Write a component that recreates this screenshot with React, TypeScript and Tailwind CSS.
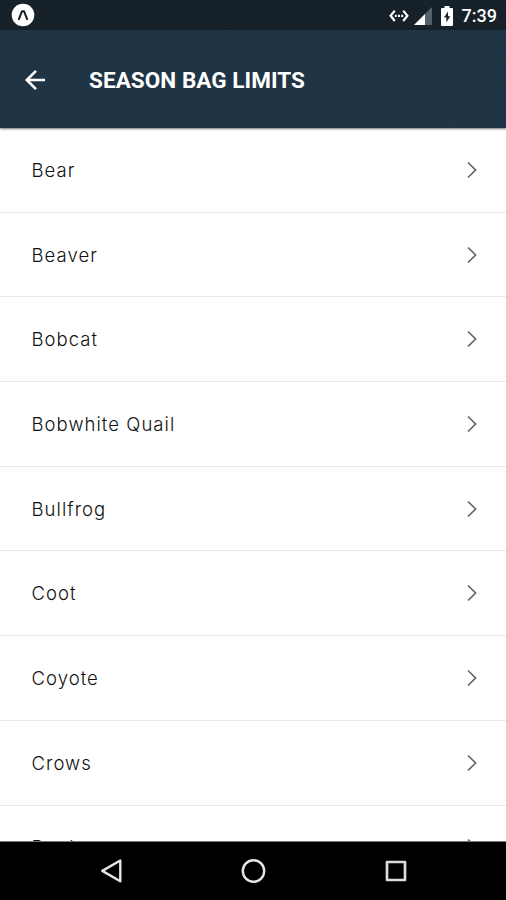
import React from 'react';

const species = [
  'Bear',
  'Beaver',
  'Bobcat',
  'Bobwhite Quail',
  'Bullfrog',
  'Coot',
  'Coyote',
  'Crows',
  'Ducks',
];

const StatusBar: React.FC = () => (
  <div className="flex h-[30px] shrink-0 items-center justify-between bg-[#16212a] pl-[11px] pr-[9px]">
    <svg className="size-[24px]" viewBox="0 0 24 24">
      <circle cx="12" cy="12" r="11.3" fill="#fff" />
      <path d="M7.6 16.8 11 8.2h2l3.4 8.6" fill="none" stroke="#16212a" strokeWidth="2" strokeLinejoin="round" />
    </svg>
    <div className="flex items-center pt-[2px]">
      <svg className="mr-[5px] h-[14px] w-[20px]" viewBox="0 0 20 14" fill="none" stroke="#fff" strokeWidth="2.2">
        <path d="M5.8 1.6 1.6 6.8l4.2 5.2M14.2 1.6l4.2 5.2-4.2 5.2" />
        <path d="M5.8 6.8h2M9 6.8h2M12.2 6.8h2" />
      </svg>
      <svg className="mr-[9px] h-[18px] w-[18px]" viewBox="0 0 18 18">
        <path d="M18 0v18H0z" fill="#52616c" />
        <path d="M11 7v11H0z" fill="#fff" />
      </svg>
      <svg className="mr-[9px] h-[20px] w-[12px]" viewBox="0 0 12 20">
        <path d="M3.5 0h5v2H11q1 0 1 1v16q0 1-1 1H1q-1 0-1-1V3q0-1 1-1h2.5z" fill="#fff" />
        <path d="M7 5.5 3 11.6h2.4V16.5l3.8-6.3H7z" fill="#16212a" />
      </svg>
      <span className="text-[18px] leading-[20px] font-medium text-white">7:39</span>
    </div>
  </div>
);

const Header: React.FC = () => (
  <header className="relative z-10 flex h-[98px] shrink-0 items-center bg-[#1f3445] pl-[24px] shadow-[0_1px_2px_rgba(0,0,0,0.55)]">
    {/* Faint contour lines */}
    <svg className="absolute inset-0 size-full opacity-60" viewBox="0 0 506 98" fill="none" stroke="#263a48">
      <path d="M0 62q55-8 104-62M24 98q18-44 92-66t78-32M192 12q42 22 85 14t78 34 57 38M230 0q44 10 84 2t82 42 65 54M394 30q40-26 112-14M396 48q50-30 110-16M450 98q-10-42 56-48" />
    </svg>
    <svg className="relative size-[23px]" viewBox="0 0 23 23" fill="none" stroke="#fff" strokeWidth="2.6">
      <path d="M21 12H3M12 2.8 2.8 12l9.2 9.2" />
    </svg>
    <h1 className="relative ml-[42px] pt-[1px] text-[22.5px] leading-[28px] font-bold tracking-[0.06px] whitespace-nowrap text-white">
      SEASON BAG LIMITS
    </h1>
  </header>
);

const NavBar: React.FC = () => (
  <nav className="relative z-10 flex h-[59px] shrink-0 items-center justify-between border-t border-[#777] bg-black pl-[100px] pr-[98px]">
    <svg className="size-[24px]" viewBox="0 0 24 24" fill="none" stroke="#e6e6e6" strokeWidth="2.4" strokeLinejoin="round">
      <path d="M20.3 1.5v20.8L2.3 11.9z" />
    </svg>
    <svg className="size-[26px]" viewBox="0 0 26 26" fill="none" stroke="#e6e6e6" strokeWidth="2.4">
      <circle cx="12.5" cy="13" r="10.7" />
    </svg>
    <svg className="size-[24px]" viewBox="0 0 24 24" fill="none" stroke="#dcdcdc" strokeWidth="2.7" strokeLinejoin="round">
      <rect x="3" y="3" width="18" height="18" />
    </svg>
  </nav>
);

const App: React.FC = () => {
  return (
    <div className="flex h-[900px] w-[506px] flex-col overflow-hidden bg-white font-['Roboto',sans-serif]">
      <StatusBar />
      <Header />
      <main className="min-h-0 flex-1 overflow-hidden">
        {species.map((name) => (
          <div
            key={name}
            className="flex h-[84.7px] items-center justify-between border-b-[1.5px] border-[#e8e8e8] pl-[31.5px] pr-[29px]"
          >
            <span className="font-['Inter',sans-serif] text-[18.5px] leading-[24px] font-light tracking-[1.05px] text-[#111]">
              {name}
            </span>
            <svg className="h-[18px] w-[10px]" viewBox="0 0 10 18" fill="none" stroke="#666" strokeWidth="1.7">
              <path d="M1 1.5 8.6 9 1 16.5" />
            </svg>
          </div>
        ))}
      </main>
      <NavBar />
    </div>
  );
};

export default App;
